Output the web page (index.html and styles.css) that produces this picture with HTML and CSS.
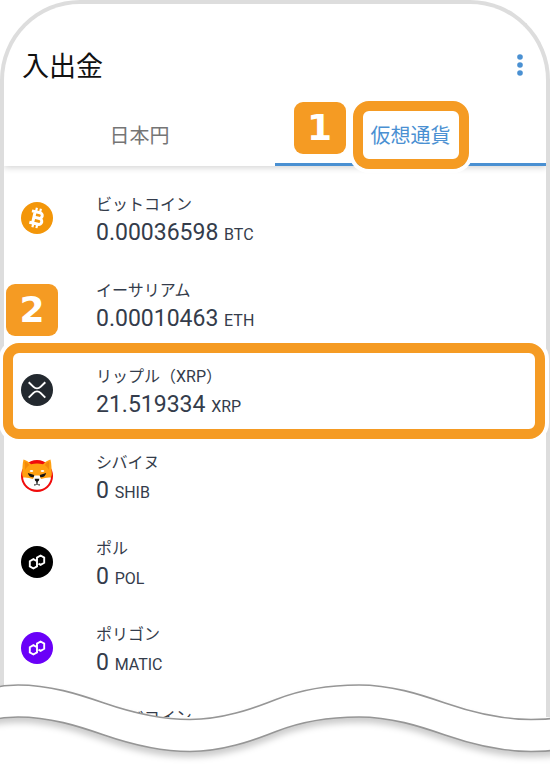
FILE: index.html
```html
<!DOCTYPE html>
<html lang="ja">
<head>
    <meta charset="UTF-8">
    <meta name="viewport" content="width=device-width, initial-scale=1.0">
    <title>入出金</title>
    <link rel="stylesheet" href="styles.css">
</head>
<body>
    <main class="phone">
        <header class="header">
            <h1 class="title">入出金</h1>
            <button class="menu" aria-label="メニュー">
                <svg width="8" height="24" viewBox="0 0 8 24" fill="#4a90d2">
                    <circle cx="4" cy="4" r="2.8"/>
                    <circle cx="4" cy="12" r="2.8"/>
                    <circle cx="4" cy="20" r="2.8"/>
                </svg>
            </button>
        </header>
        <nav class="tabs">
            <button class="tab">日本円</button>
            <button class="tab active"><span class="tab-label">仮想通貨<span class="ring"></span><span class="badge">1</span></span></button>
        </nav>
        <ul class="coins">
            <li class="coin">
                <svg class="icon" viewBox="0 0 32 32">
                    <circle cx="16" cy="16" r="16" fill="#f39609"/>
                    <g transform="rotate(13 16 16)" fill="none" stroke="#fff" stroke-width="3">
                        <path d="M9.500 10.200h8.300a2.800 2.800 0 0 1 0 5.700h-4.500M9.500 21.900h9a3 3 0 0 0 0-6h-5M12.800 10.500v11"/>
                        <path stroke-width="2.200" d="M13.600 6v4M17.700 6v4M13.600 22v4M17.700 22v4"/>
                    </g>
                </svg>
                <div class="info">
                    <p class="name">ビットコイン</p>
                    <p class="amount">0.00036598 <span class="unit">BTC</span></p>
                </div>
            </li>
            <li class="coin">
                <span class="icon"></span>
                <div class="info">
                    <p class="name">イーサリアム</p>
                    <p class="amount">0.00010463 <span class="unit">ETH</span></p>
                </div>
            </li>
            <li class="coin selected">
                <span class="ring"></span>
                <span class="badge">2</span>
                <svg class="icon" viewBox="0 0 32 32">
                    <circle cx="16" cy="16" r="16" fill="#23292f"/>
                    <g fill="none" stroke="#fff" stroke-width="2">
                        <path d="M7.700 8.200l4.800 4.700a5 5 0 0 0 7 0l4.800-4.700"/>
                        <path d="M7.700 23.600l4.800-4.700a5 5 0 0 1 7 0l4.800 4.700"/>
                    </g>
                </svg>
                <div class="info">
                    <p class="name">リップル（XRP）</p>
                    <p class="amount">21.519334 <span class="unit">XRP</span></p>
                </div>
            </li>
            <li class="coin">
                <svg class="icon" viewBox="0 0 32 32">
                    <circle cx="16" cy="16" r="16" fill="#f00b0b"/>
                    <path d="M2.500-.5C5 0 8 2 10 4.300q6-1.800 12 0C24 2 27 0 29.500-.5 30.700 4 30.400 9 30.800 13c.3 3.500-1.800 6-4.300 6.500h-21C3 19 .9 16.500 1.200 13 1.600 9 1.300 4 2.500-.5z" fill="#ffa012"/>
                    <path d="M3.700 1.500c2 .7 3.500 2 4.500 3.500-2 1.500-3 3-4 5zM28.300 1.500c-2 .7-3.500 2-4.500 3.500 2 1.500 3 3 4 5z" fill="#f38a0b"/>
                    <path d="M2 17.500q5-.5 10 1.500l1.500-3.500h5L20 19q5-2 10-1.500C29 25 23 29.800 16 29.800S3 25 2 17.500z" fill="#fff"/>
                    <ellipse cx="10.500" cy="11" rx="1.800" ry="1" fill="#fff"/>
                    <ellipse cx="21.500" cy="11" rx="1.800" ry="1" fill="#fff"/>
                    <path d="M6.800 13l6.400 2-.5 2.200q-4.700.6-5.900-4.200zM25.200 13l-6.400 2 .5 2.200q4.700.6 5.900-4.200z" fill="#141414"/>
                    <path d="M13.700 18.800h4.600q.2 2.200-1.600 3v1.700h-1.400v-1.700q-1.800-.8-1.600-3z" fill="#141414"/>
                    <path d="M13 25q1.500.2 3-1.200 1.500 1.400 3 1.200" fill="none" stroke="#141414"/>
                </svg>
                <div class="info">
                    <p class="name">シバイヌ</p>
                    <p class="amount">0 <span class="unit">SHIB</span></p>
                </div>
            </li>
            <li class="coin">
                <svg class="icon" viewBox="0 0 32 32">
                    <circle cx="16" cy="16" r="16" fill="#000"/>
                    <path d="M16 15.300L12.400 13.200 8.800 15.300V20.400L12.400 22.500 16 20.400V11.600L19.600 9.500 23.200 11.600V16.700L19.600 18.800 17.500 17.600" fill="none" stroke="#fff" stroke-width="1.900"/>
                </svg>
                <div class="info">
                    <p class="name">ポル</p>
                    <p class="amount">0 <span class="unit">POL</span></p>
                </div>
            </li>
            <li class="coin">
                <svg class="icon" viewBox="0 0 32 32">
                    <circle cx="16" cy="16" r="16" fill="#6a00f8"/>
                    <path d="M16 15.300L12.400 13.200 8.800 15.300V20.400L12.400 22.500 16 20.400V11.600L19.600 9.500 23.200 11.600V16.700L19.600 18.800 17.500 17.600" fill="none" stroke="#fff" stroke-width="1.900"/>
                </svg>
                <div class="info">
                    <p class="name">ポリゴン</p>
                    <p class="amount">0 <span class="unit">MATIC</span></p>
                </div>
            </li>
            <li class="coin cut">
                <span class="icon"></span>
                <div class="info">
                    <p class="name">ドージコイン</p>
                </div>
            </li>
        </ul>
    </main>
    <!-- torn edge at the bottom of the phone -->
    <svg class="wave" viewBox="0 0 550 87" preserveAspectRatio="none">
        <path class="wave-fill" d="M-10 6.500Q4 3 18 3C50 3 78 12 104 21S158 37.500 190 37.500 252 27 276 17.500 327 3 359 3s60 9 86 18 54 16.500 86 16.500q15 0 30-2v32q-15 2-30 2c-32 0-60-7.500-86-16.500S391 35 359 35s-59 5-83 14.500-54 20-86 20S130 62 104 53 50 35 18 35Q4 35-10 38z"/>
    </svg>
</body>
</html>
```

FILE: styles.css
```css
* {
    box-sizing: border-box;
}
body {
    margin: 0;
    background: #fff;
    color: #343c4b;
    font-family: Roboto, "Noto Sans CJK JP", sans-serif;
    overflow: hidden;
}
h1, p, ul {
    margin: 0;
    padding: 0;
}
button {
    border: none;
    padding: 0;
    background: none;
    font-family: inherit;
    cursor: pointer;
}
.phone {
    border: 4px solid #ddd;
    border-bottom: none;
    border-radius: 80px 80px 0 0;
}
.header {
    display: flex;
    justify-content: space-between;
    align-items: flex-start;
    padding: 43px 18px 9px;
}
.title {
    font-size: 27px;
    font-weight: 400;
    line-height: 40px;
    color: #111;
}
.menu {
    width: 16px;
    height: 36px;
}
.menu svg {
    display: block;
    margin: 0 auto;
}
/* clipped so the shadow only falls below the bar */
.tabs {
    display: flex;
    padding-top: 10px;
    box-shadow: 0 2px 6px rgba(0, 0, 0, 0.16);
    clip-path: inset(0 0 -10px 0);
}
.tab {
    flex: 1;
    height: 60px;
    padding-top: 2px;
    border-bottom: 3px solid transparent;
    font-size: 20px;
    line-height: 28px;
    color: #757575;
}
.tab.active {
    border-bottom-color: #4a90d2;
    color: #4a90d2;
}
.tab-label {
    position: relative;
    display: inline-block;
}

/* orange marks over the screen */
.ring {
    position: absolute;
    inset: -21px -18px -19px;
    border: 10px solid #f59b23;
    border-radius: 16px;
    box-shadow: 0 0 0 4px #fff;
}
.badge {
    position: absolute;
    top: -20px;
    left: -77px;
    width: 52px;
    height: 52px;
    border-radius: 9px;
    background: #f59b23;
    color: #fff;
    font: bold 36px/52px "DejaVu Sans", sans-serif;
    text-align: center;
}

.coins {
    padding-top: 9px;
    list-style: none;
}
.coin {
    position: relative;
    display: flex;
    align-items: center;
    gap: 43px;
    height: 86px;
    padding-left: 17px;
}
.icon {
    flex: none;
    width: 32px;
    height: 32px;
    overflow: visible;
}
.info {
    padding-top: 3px;
}
.name {
    font-size: 16px;
    line-height: 28px;
}
.amount {
    font-size: 23px;
    line-height: 28px;
}
.unit {
    font-size: 16px;
}
.selected .ring {
    inset: -4px 1px -6px -1px;
}
.selected .badge {
    top: -63px;
    left: 2px;
}
.cut {
    align-items: flex-start;
    height: 26px;
    padding-top: 10px;
    overflow: hidden;
}
.wave {
    position: relative;
    display: block;
    width: 100%;
    height: 87px;
    margin-top: -35px;
}
.wave-fill {
    fill: #fff;
    stroke: #969696;
    stroke-width: 1.6px;
    filter: drop-shadow(0 5px 3px rgba(0, 0, 0, 0.2));
}
```
